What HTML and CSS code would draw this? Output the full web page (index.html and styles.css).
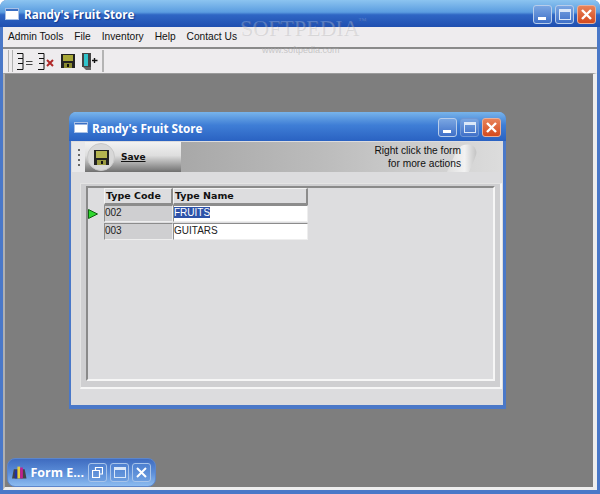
FILE: index.html
```html
<!DOCTYPE html>
<html lang="en">
    <head>
        <title>Randy's Fruit Store</title>
        <link rel="stylesheet" href="styles.css">
    </head>
    <body>
        <div id="mainWindow">
            <div id="mainTitle">
                <svg class="appIcon" width="14" height="12" viewBox="0 0 14 12"><rect x="0.5" y="0.5" width="13" height="11" fill="#fff" stroke="#a8c0e6"/><rect x="1" y="1" width="12" height="2" fill="#3a6fc4"/></svg>
                <span class="titleText">Randy's Fruit Store</span>
                <div class="windowButtons">
                    <div class="winBtn"><span class="minGlyph"></span></div>
                    <div class="winBtn"><span class="maxGlyph"></span></div>
                    <div class="winBtn closeBtn"><svg width="13" height="13" viewBox="0 0 13 13"><path d="M2 2L11 11M11 2L2 11" stroke="#fff" stroke-width="2.4"/></svg></div>
                </div>
            </div>
            <div id="menuBar">
                <span>Admin Tools</span>
                <span>File</span>
                <span>Inventory</span>
                <span>Help</span>
                <span>Contact Us</span>
            </div>
            <div id="toolBar">
                <div class="grip"></div>
                <div class="toolIcons">
                    <svg width="16" height="17" viewBox="0 0 16 17"><path d="M0 0.5H6V5.5H1M6 5.5V10.5H1M6 10.5V16.5H0" fill="none" stroke="#111"/><path d="M9 8.5H15.5M9 11.5H15.5" stroke="#444"/></svg>
                    <svg width="18" height="17" viewBox="0 0 18 17"><path d="M0 0.5H6V5.5H1M6 5.5V10.5H1M6 10.5V16.5H0" fill="none" stroke="#111"/><path d="M9 7L15 13M15 7L9 13" stroke="#b02828" stroke-width="2"/></svg>
                    <svg width="16" height="17" viewBox="0 0 16 17"><path d="M0 1H14V15H0Z" fill="#222"/><rect x="2" y="2" width="10" height="6" fill="#a8a838"/><rect x="3" y="10" width="8" height="5" fill="#8a8a30"/><rect x="6" y="11" width="2" height="3" fill="#111"/></svg>
                    <svg width="16" height="17" viewBox="0 0 16 17"><rect x="0" y="0" width="9" height="14" fill="#444"/><rect x="2" y="1" width="4" height="12" fill="#30c4cc"/><path d="M1 14L4 17H9V14" fill="#666"/><path d="M10 7.5H15.5M12.5 5V10" stroke="#111" stroke-width="1.4"/></svg>
                </div>
            </div>
            <div id="mdiArea">
                <div id="childWindow">
                    <div id="childTitle">
                        <svg class="appIcon" width="14" height="11" viewBox="0 0 14 11"><rect x="0.5" y="0.5" width="13" height="10" fill="#fff" stroke="#a8c0e6"/><rect x="1" y="1" width="12" height="1.5" fill="#3a6fc4"/></svg>
                        <span class="childTitleText">Randy's Fruit Store</span>
                        <div class="windowButtons">
                            <div class="winBtn"><span class="minGlyph"></span></div>
                            <div class="winBtn dimBtn"><span class="maxGlyph"></span></div>
                            <div class="winBtn closeBtn"><svg width="13" height="13" viewBox="0 0 13 13"><path d="M2 2L11 11M11 2L2 11" stroke="#fff" stroke-width="2.4"/></svg></div>
                        </div>
                    </div>
                    <div id="actionBar">
                        <div id="gripStrip"><div class="gripDots"></div></div>
                        <div id="saveSection">
                            <div class="saveCircle">
                                <svg width="15" height="15" viewBox="0 0 15 15"><path d="M0 0H15V15H0Z" fill="#222"/><rect x="2" y="1" width="11" height="7" fill="#b4b450"/><rect x="3" y="10" width="9" height="5" fill="#9a9a40"/><rect x="7" y="11" width="2" height="3" fill="#111"/></svg>
                            </div>
                            <span class="saveLabel">Save</span>
                        </div>
                        <div id="hintSection">
                            <svg class="hintMouse" width="30" height="28" viewBox="0 0 30 28"><defs><linearGradient id="mouseFill" x1="0" y1="0" x2="1" y2="0"><stop offset="0" stop-color="#dedede"/><stop offset="0.6" stop-color="#f2f2f2"/><stop offset="1" stop-color="#c4c4c4"/></linearGradient></defs><path d="M0 28C4 20 8 8 13 3C17 0 22 0 26 2C29 4 30 8 29 11C27 17 24 23 22 28Z" fill="url(#mouseFill)"/></svg>
                            <span class="hintText">Right click the form<br>for more actions</span>
                        </div>
                    </div>
                    <div id="formBody">
                        <div id="gridFrame">
                            <div class="gridHeader">
                                <div class="rowMarker"></div>
                                <div class="headCell codeCol">Type Code</div>
                                <div class="headCell nameCol">Type Name</div>
                            </div>
                            <div class="gridRow">
                                <div class="rowMarker"><svg width="10" height="10" viewBox="0 0 10 10"><path d="M0.5 0.5L9.5 5L0.5 9.5Z" fill="#2fd82f" stroke="#106010"/></svg></div>
                                <div class="codeCell codeCol">002</div>
                                <div class="nameCell nameCol"><span class="selected">FRUITS</span></div>
                            </div>
                            <div class="gridRow">
                                <div class="rowMarker"></div>
                                <div class="codeCell codeCol">003</div>
                                <div class="nameCell nameCol">GUITARS</div>
                            </div>
                        </div>
                    </div>
                </div>

                <div id="minimizedWindow">
                    <svg width="16" height="15" viewBox="0 0 16 15"><path d="M0 14L2 4H14L16 14Z" fill="#444"/><rect x="3" y="5" width="3" height="9" fill="#2030a0"/><rect x="6" y="1" width="3" height="13" fill="#e8d040"/><rect x="9" y="2" width="3" height="12" fill="#c02090"/></svg>
                    <span class="minTitle">Form E...</span>
                    <div class="windowButtons">
                        <div class="winBtn glassBtn"><svg width="11" height="11" viewBox="0 0 11 11"><path d="M3.5 3V0.5H10.5V7H8M0.5 3.5H7.5V10.5H0.5Z" fill="none" stroke="#fff" stroke-width="1.2"/></svg></div>
                        <div class="winBtn glassBtn"><span class="maxGlyph"></span></div>
                        <div class="winBtn glassBtn"><svg width="13" height="13" viewBox="0 0 13 13"><path d="M2 2L11 11M11 2L2 11" stroke="#fff" stroke-width="2"/></svg></div>
                    </div>
                </div>
            </div>
            <div id="watermark">SOFTPEDIA<sup class="tradeMark">TM</sup></div>
            <div id="watermarkUrl">www.softpedia.com</div>
        </div>
    </body>
</html>
```

FILE: styles.css
```css
html, body{
    margin: 0;
    height: 100%;
    overflow: hidden;
}

body{
    font-family: 'Liberation Sans', sans-serif;
}

#mainWindow{
    position: relative;
    box-sizing: border-box;
    width: 600px;
    height: 494px;
    display: flex;
    flex-direction: column;
    background-color: #eeecee;
    border-left: 3px solid #4a78c8;
    border-right: 3px solid #4a78c8;
    border-bottom: 4px solid #4a78c8;
    border-radius: 7px 7px 0 0;
}

#mainTitle{
    flex: none;
    height: 27px;
    box-sizing: border-box;
    margin: 0 -3px;
    padding: 1px 4px 0 5px;
    display: flex;
    align-items: center;
    gap: 5px;
    border-radius: 7px 7px 0 0;
    background: linear-gradient(#8cc4f0 0, #5b9de0 45%, #2f66c4 55%, #1f4fb0 100%);
}

.titleText{
    color: white;
    font-family: 'Open Sans', sans-serif;
    font-weight: bold;
    font-size: 11.7px;
    text-shadow: 1px 1px 1px #103a90;
}

.windowButtons{
    margin-left: auto;
    display: flex;
    gap: 3px;
}

.winBtn{
    box-sizing: border-box;
    width: 19px;
    height: 19px;
    display: flex;
    align-items: center;
    justify-content: center;
    position: relative;
    border: 1px solid #b8cdea;
    border-radius: 3px;
    background: linear-gradient(#7aa6e2, #3f70c8);
}

.closeBtn{
    border-color: #eab09a;
    background: linear-gradient(#e8835a, #d44a1e);
}

.dimBtn{
    border-color: #6f97d4;
}

.minGlyph{
    position: absolute;
    left: 4px;
    bottom: 3px;
    width: 8px;
    height: 3px;
    background-color: white;
}

.maxGlyph{
    box-sizing: border-box;
    width: 12px;
    height: 11px;
    border: 1px solid #dbe8f8;
    border-top-width: 3px;
}

#menuBar{
    flex: none;
    height: 19px;
    display: flex;
    align-items: center;
    gap: 11px;
    padding-left: 5px;
    font-size: 10.2px;
    color: #111;
    background-color: #eeecee;
}

#toolBar{
    flex: none;
    height: 26px;
    margin-top: 1px;
    display: flex;
    align-items: center;
    padding-left: 5px;
    box-sizing: border-box;
    border-top: 2px solid #8a8a8a;
    background-color: #eeecee;
}

.grip{
    box-sizing: border-box;
    width: 5px;
    height: 22px;
    border-left: 1px solid #b0b0b0;
    border-right: 1px solid #b0b0b0;
}

.toolIcons{
    height: 22px;
    display: flex;
    align-items: center;
    gap: 5px;
    padding: 0 4px;
    border-right: 2px solid #b4b4b4;
}

#mdiArea{
    flex: 1;
    position: relative;
    background-color: #7e7e7e;
    border-top: 1px solid #9a9a9a;
    border-left: 2px solid #b0b0b0;
    border-right: 4px solid #eeeeee;
    border-bottom: 3px solid #eeeeee;
}

#childWindow{
    position: absolute;
    left: 64px;
    top: 38px;
    width: 437px;
    height: 297px;
    box-sizing: border-box;
    display: flex;
    flex-direction: column;
    background-color: #dcdcde;
    border-left: 2px solid #4a78c8;
    border-right: 3px solid #4a78c8;
    border-bottom: 4px solid #4a78c8;
    border-radius: 7px 7px 0 0;
}

#childTitle{
    flex: none;
    height: 29px;
    margin: 0 -3px 0 -2px;
    padding: 2px 5px 0 5px;
    box-sizing: border-box;
    display: flex;
    align-items: center;
    gap: 4px;
    border-radius: 7px 7px 0 0;
    background: linear-gradient(#78b4ea 0, #3f7ed6 45%, #2a62c2 100%);
}

.childTitleText{
    color: white;
    font-family: 'Open Sans', sans-serif;
    font-weight: bold;
    font-size: 11.7px;
}

#actionBar{
    flex: none;
    height: 30px;
    display: flex;
    margin: 1px 2px 0 1px;
}

#gripStrip{
    width: 13px;
    display: flex;
    justify-content: center;
    align-items: center;
    background-color: #e8e8ea;
}

.gripDots{
    width: 2px;
    height: 17px;
    background-image: linear-gradient(#666 2px, transparent 2px);
    background-size: 2px 5px;
}

#saveSection{
    width: 96px;
    flex: none;
    display: flex;
    align-items: center;
    gap: 6px;
    padding-left: 2px;
    box-sizing: border-box;
    background: linear-gradient(#f2f2f2, #dedede 45%, #707070);
}

.saveCircle{
    box-sizing: border-box;
    width: 28px;
    height: 28px;
    display: flex;
    align-items: center;
    justify-content: center;
    border-radius: 50%;
    background-color: #d8d8d8;
    border: 1px solid #c8c8c8;
}

.saveLabel{
    font-family: 'DejaVu Sans', sans-serif;
    font-size: 9px;
    font-weight: bold;
    color: #111;
    text-decoration: underline;
}

#hintSection{
    flex: 1;
    display: flex;
    justify-content: flex-end;
    align-items: center;
    position: relative;
    padding-right: 40px;
    background: linear-gradient(90deg, #a8a8a8, #bcbcbc 45%, #dcdcdc);
}

.hintText{
    text-align: right;
    font-size: 10.2px;
    line-height: 13px;
    color: #111;
    position: relative;
}

.hintMouse{
    position: absolute;
    right: 24px;
    bottom: 0;
}

#formBody{
    flex: 1;
    margin: 11px 1px 16px 9px;
    padding: 2px 5px 6px 5px;
    background-color: #cfcfd1;
    border: 1px solid #e4e4e4;
    border-bottom: 2px solid #f6f6f6;
    border-right: 2px solid #f6f6f6;
    display: flex;
}

#gridFrame{
    flex: 1;
    background-color: #dddddf;
    border: 2px solid #8a8a8a;
    border-right-color: #f6f6f6;
    border-bottom-color: #f6f6f6;
}

.gridHeader, .gridRow{
    display: flex;
    height: 17px;
}

.gridRow{
    margin-bottom: 1px;
}

.rowMarker{
    width: 16px;
    display: flex;
    align-items: center;
}

.codeCol{
    width: 69px;
    box-sizing: border-box;
}

.nameCol{
    width: 135px;
    box-sizing: border-box;
}

.headCell{
    font-family: 'DejaVu Sans', sans-serif;
    font-size: 9.5px;
    font-weight: bold;
    line-height: 13px;
    color: #111;
    padding-left: 1px;
    border: 1px solid #f2f2f2;
    border-right: 2px solid #8c8c8c;
    border-bottom: 2px solid #8c8c8c;
}

.codeCell, .nameCell{
    font-size: 10px;
    line-height: 14px;
    color: #222;
    border: 1px solid #8c8c8c;
    border-right-color: #eee;
    border-bottom-color: #eee;
}

.codeCell{
    background-color: #cfcfd1;
}

.nameCell{
    background-color: white;
}

.selected{
    background-color: #2d52a8;
    color: white;
}

#minimizedWindow{
    position: absolute;
    left: 2px;
    bottom: 0;
    width: 149px;
    height: 29px;
    box-sizing: border-box;
    display: flex;
    align-items: center;
    gap: 4px;
    padding: 0 4px;
    border-radius: 8px;
    border: 1px solid #5c86cc;
    background: linear-gradient(#3f6cc0, #5b8dd8 50%, #8cbcf0);
}

.minTitle{
    color: white;
    font-family: 'Open Sans', sans-serif;
    font-weight: bold;
    font-size: 12.5px;
    white-space: nowrap;
}

.glassBtn{
    border-color: #a8c4ea;
    background: linear-gradient(#4e80d0, #6c9ee0);
}

#watermark{
    position: absolute;
    left: 237px;
    top: 15px;
    font-family: 'Liberation Serif', serif;
    font-size: 22px;
    color: rgba(255, 255, 255, 0.22);
    text-shadow: 1px 1px 0 rgba(120, 120, 120, 0.2);
}

.tradeMark{
    font-size: 5px;
    vertical-align: 14px;
    line-height: 0;
}

#watermarkUrl{
    position: absolute;
    left: 259px;
    top: 45px;
    font-size: 9px;
    color: rgba(170, 170, 170, 0.6);
}
```
